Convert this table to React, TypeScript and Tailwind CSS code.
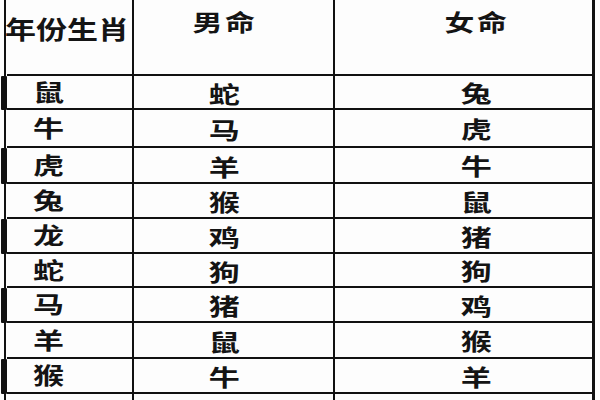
import React from "react";

const rows: { a: string; b: string; c: string; h: string; thick: boolean }[] = [
  { a: "鼠", b: "蛇", c: "兔", h: "h-[34px]", thick: true },
  { a: "牛", b: "马", c: "虎", h: "h-[38px]", thick: false },
  { a: "虎", b: "羊", c: "牛", h: "h-[36px]", thick: true },
  { a: "兔", b: "猴", c: "鼠", h: "h-[35px]", thick: false },
  { a: "龙", b: "鸡", c: "猪", h: "h-[35px]", thick: true },
  { a: "蛇", b: "狗", c: "狗", h: "h-[34px]", thick: false },
  { a: "马", b: "猪", c: "鸡", h: "h-[35px]", thick: true },
  { a: "羊", b: "鼠", c: "猴", h: "h-[36px]", thick: false },
  { a: "猴", b: "牛", c: "羊", h: "h-[35px]", thick: true },
];

const font = "font-['Noto_Sans_CJK_SC','Noto_Sans',sans-serif]";

function Glyph({ t, origin }: { t: string; origin: string }) {
  return (
    <span
      className={`inline-block ${origin} scale-x-[1.35] text-[23px] leading-none font-semibold text-[#141414] tracking-[1px]`}
    >
      {t}
    </span>
  );
}

export default function App() {
  return (
    <div className={`w-[600px] h-[400px] overflow-hidden bg-[#fdfdfd] ${font}`}>
      <div className="flex flex-col">
        {/* header */}
        <div className="flex h-[76px]">
          <div className="w-[7px] flex justify-end">
            <div className="w-[2px] mr-[1px] bg-[#111]" />
          </div>
          <div className="w-[127px] border-r-2 border-b-2 border-[#111] flex items-start pt-[16px]">
            <span className="inline-block origin-left scale-x-[1.24] -ml-[2px] text-[25px] leading-none font-semibold text-[#141414]">
              年份生肖
            </span>
          </div>
          <div className="w-[201px] border-r-2 border-b-2 border-[#111] flex justify-center pr-[18px] pt-[10px]">
            <span className="inline-block scale-x-[1.3] text-[23px] leading-none font-semibold text-[#141414] tracking-[2px]">
              男命
            </span>
          </div>
          <div className="w-[260px] border-r-[3px] border-b-2 border-[#111] flex justify-center pl-[26px] pt-[10px]">
            <span className="inline-block scale-x-[1.3] text-[23px] leading-none font-semibold text-[#141414] tracking-[2px]">
              女命
            </span>
          </div>
        </div>
        {rows.map((r, i) => (
          <div key={i} className={`flex ${r.h}`}>
            <div className="w-[7px] flex justify-end">
              {r.thick ? (
                <div className="w-[6px] bg-[#111] rounded-[1px]" />
              ) : (
                <div className="w-[2px] mr-[1px] bg-[#111]" />
              )}
            </div>
            <div className="w-[127px] border-r-2 border-b-2 border-[#111] flex items-center pl-[26px] pb-[2px]">
              <Glyph t={r.a} origin="origin-left" />
            </div>
            <div className="w-[201px] border-r-2 border-b-2 border-[#111] flex items-center justify-center pr-[17px] pt-[2px]">
              <Glyph t={r.b} origin="origin-center" />
            </div>
            <div className="w-[260px] border-r-[3px] border-b-2 border-[#111] flex items-center justify-center pl-[26px] pt-[1px]">
              <Glyph t={r.c} origin="origin-center" />
            </div>
          </div>
        ))}
        <div className="flex h-[20px]">
          <div className="w-[7px] flex justify-end">
            <div className="w-[2px] mr-[1px] bg-[#111]" />
          </div>
          <div className="w-[127px] border-r-2 border-[#111]" />
          <div className="w-[201px] border-r-2 border-[#111]" />
          <div className="w-[260px] border-r-[3px] border-[#111]" />
        </div>
      </div>
    </div>
  );
}
